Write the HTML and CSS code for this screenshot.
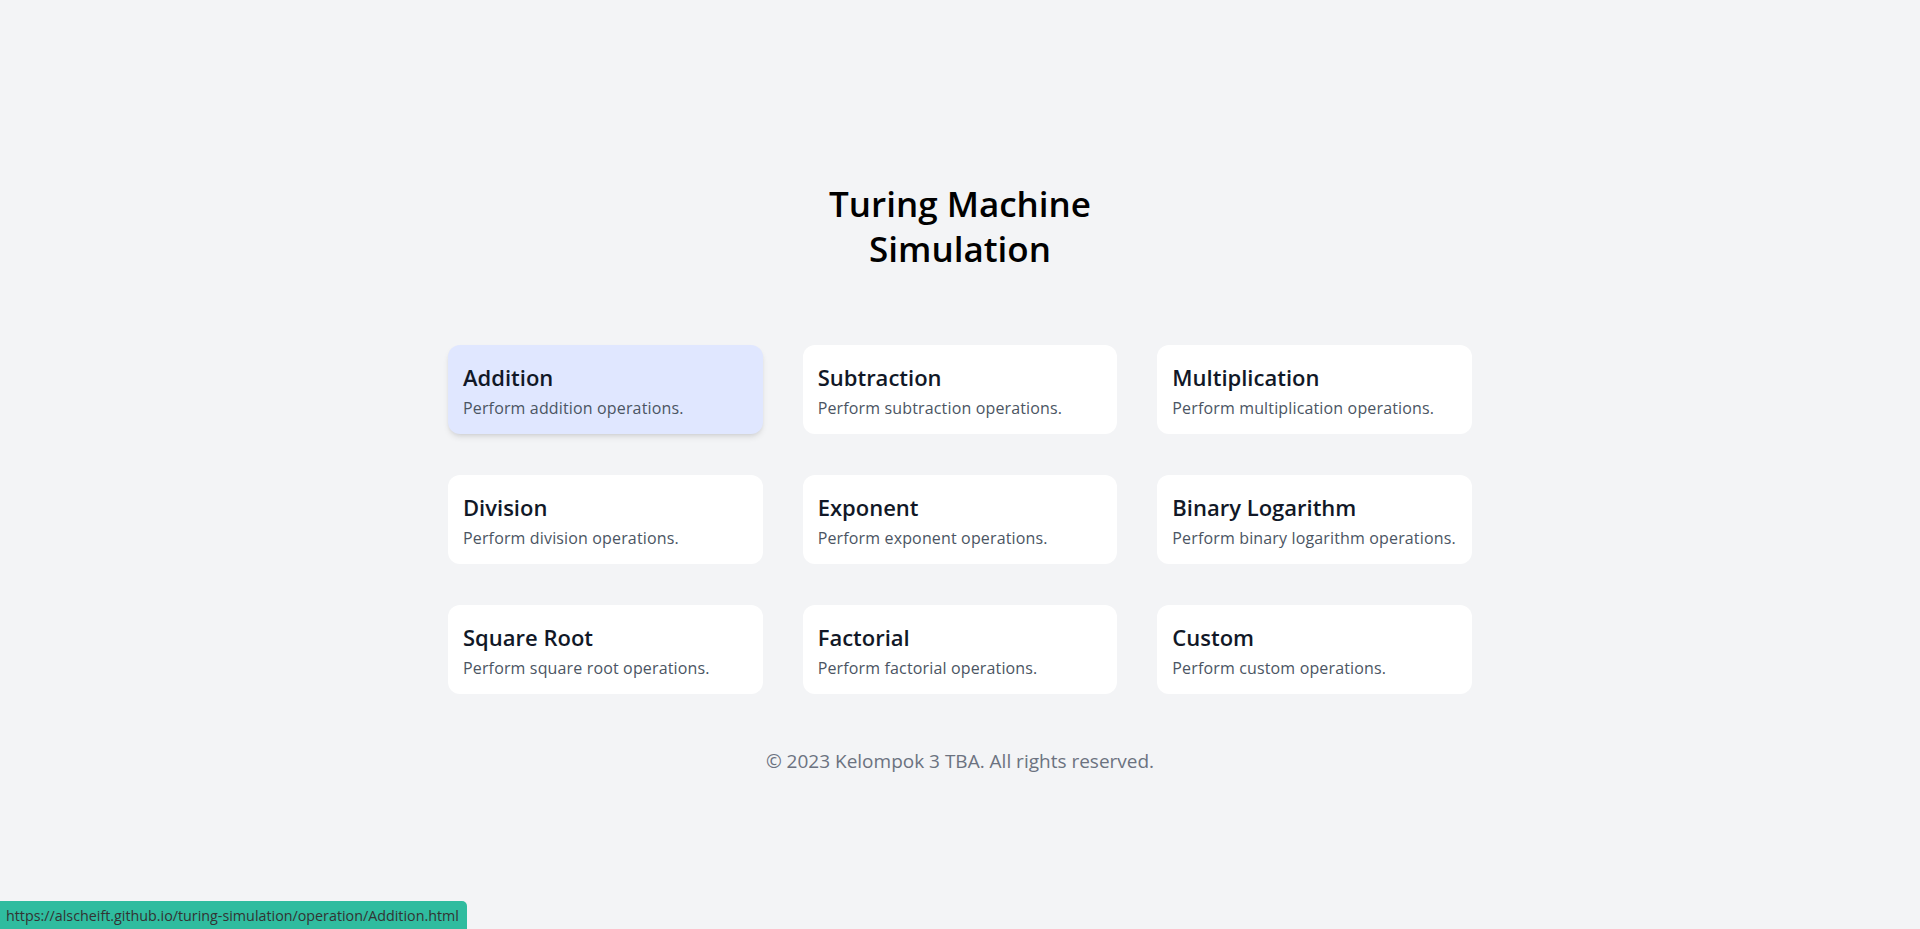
FILE: index.html
```html
<!DOCTYPE html>
<html lang="en">
<head>
<meta charset="utf-8">
<title>Turing Machine Simulation</title>
<link rel="stylesheet" href="styles.css">
</head>
<body>
<main class="page">
  <h1 class="title">Turing Machine Simulation</h1>
  <div class="grid">
    <a class="card card-active" href="#"><h2 class="card-title">Addition</h2><p class="card-desc">Perform addition operations.</p></a>
    <a class="card" href="#"><h2 class="card-title">Subtraction</h2><p class="card-desc">Perform subtraction operations.</p></a>
    <a class="card" href="#"><h2 class="card-title">Multiplication</h2><p class="card-desc">Perform multiplication operations.</p></a>
    <a class="card" href="#"><h2 class="card-title">Division</h2><p class="card-desc">Perform division operations.</p></a>
    <a class="card" href="#"><h2 class="card-title">Exponent</h2><p class="card-desc">Perform exponent operations.</p></a>
    <a class="card" href="#"><h2 class="card-title">Binary Logarithm</h2><p class="card-desc">Perform binary logarithm operations.</p></a>
    <a class="card" href="#"><h2 class="card-title">Square Root</h2><p class="card-desc">Perform square root operations.</p></a>
    <a class="card" href="#"><h2 class="card-title">Factorial</h2><p class="card-desc">Perform factorial operations.</p></a>
    <a class="card" href="#"><h2 class="card-title">Custom</h2><p class="card-desc">Perform custom operations.</p></a>
  </div>
  <footer class="footer">© 2023 Kelompok 3 TBA. All rights reserved.</footer>
</main>
<div class="status">https://alscheift.github.io/turing-simulation/operation/Addition.html</div>
</body>
</html>
```

FILE: styles.css
```css
* { box-sizing: border-box; }
html, body { margin: 0; padding: 0; }
body {
  background: #f3f4f6;
  font-family: "Open Sans", "Noto Sans", sans-serif;
  color: #111827;
}
.page {
  min-height: 929px;
  display: flex;
  flex-direction: column;
  align-items: center;
  padding-top: 181px;
}
.title {
  margin: 0;
  width: 300px;
  text-align: center;
  font-size: 35px;
  line-height: 45px;
  font-weight: 600;
  color: #000;
}
.grid {
  margin-top: 74px;
  width: 1024px;
  display: grid;
  grid-template-columns: repeat(3, 1fr);
  column-gap: 40px;
  row-gap: 41px;
}
.card {
  display: block;
  background: #fff;
  border-radius: 12px;
  padding: 17px 15px 14px;
  height: 89px;
  text-decoration: none;
}
.card-active {
  background: #e0e7ff;
  box-shadow: 0 4px 6px -1px rgba(0,0,0,0.1), 0 2px 4px -2px rgba(0,0,0,0.1);
}
.card-title {
  margin: 0 0 4px;
  font-size: 22px;
  line-height: 30px;
  font-weight: 600;
  color: #111827;
}
.card-desc {
  margin: 0;
  font-size: 16px;
  line-height: 24px;
  letter-spacing: 0.15px;
  white-space: nowrap;
  color: #4b5563;
}
.footer {
  margin-top: 53px;
  font-size: 19px;
  line-height: 28px;
  color: #6b7280;
}
.status {
  position: fixed;
  left: 0;
  bottom: 0;
  height: 28px;
  padding: 0 8px 0 6px;
  display: flex;
  align-items: center;
  background: #2fbc9f;
  color: #333;
  font-size: 14.3px;
  border-top-right-radius: 5px;
  font-family: "Open Sans", sans-serif;
}
```
